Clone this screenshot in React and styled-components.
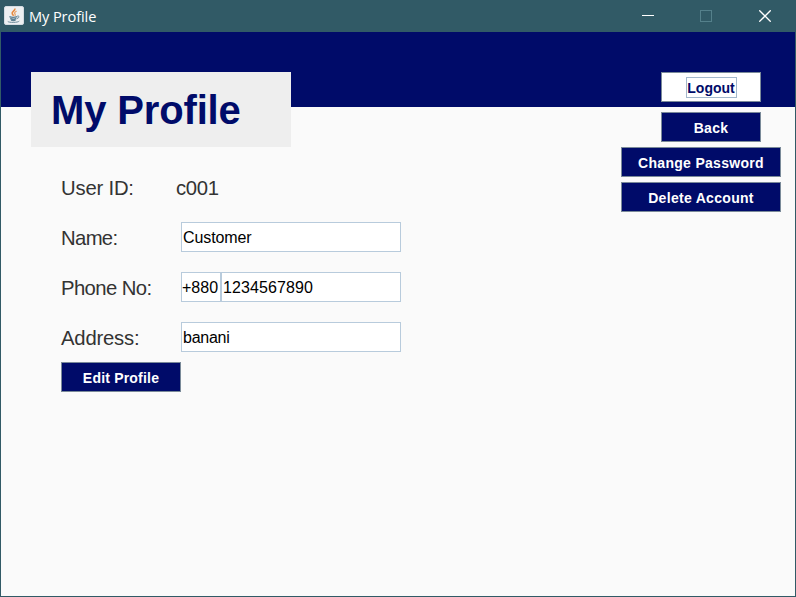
import React from "react";
import styled, { createGlobalStyle } from "styled-components";

const GlobalStyle = createGlobalStyle`
  *, *::before, *::after { box-sizing: border-box; }
  body { margin: 0; overflow: hidden; font-family: "Liberation Sans", Arial, sans-serif; }
`;

const Window = styled.div`
  display: flex;
  flex-direction: column;
  width: 796px;
  height: 597px;
  background: #fafafa;
  border: solid #315a66;
  border-width: 0 1px 1px;
`;

const TitleBar = styled.header`
  display: flex;
  align-items: center;
  flex: 0 0 32px;
  margin: 0 -1px;
  padding-left: 4px;
  background: #315a66;
  color: #fff;
`;

const WindowTitle = styled.span`
  flex: 1;
  margin-left: 5px;
  font: 14.6px/20px "Open Sans", "Noto Sans", sans-serif;
  letter-spacing: -0.1px;
`;

const WindowControls = styled.div`
  display: flex;
  width: 175px;
  margin-right: 2px;
`;

const ControlButton = styled.button`
  display: flex;
  align-items: center;
  justify-content: center;
  flex: 1;
  height: 32px;
  padding: 0;
  border: 0;
  background: none;
  color: ${(p) => (p.disabled ? "#54808b" : "#fff")};
`;

const Body = styled.main`
  display: flex;
  justify-content: space-between;
  flex: 1;
  padding: 40px 14px 0 30px;
  background: linear-gradient(#000b69 75px, #fafafa 75px);
`;

const Profile = styled.section`
  width: 370px;
`;

const Heading = styled.h1`
  width: 260px;
  height: 75px;
  margin: 0 0 25px;
  padding-left: 20px;
  background: #eee;
  color: #000b69;
  font-size: 40px;
  font-weight: bold;
  line-height: 77px;
  letter-spacing: -0.15px;
`;

const Form = styled.div`
  display: flex;
  flex-direction: column;
  gap: 20px;
  padding-left: 30px;
`;

const Row = styled.div`
  display: grid;
  grid-template-columns: ${(p) => p.$labelWidth || "120px"} 220px;
  height: 30px;
`;

const Label = styled.span`
  color: #333;
  font-size: 20.3px;
  line-height: 32px;
  letter-spacing: ${(p) => p.$tracking};
  white-space: nowrap;
`;

const Fields = styled.div`
  display: flex;
`;

const Field = styled.input`
  flex: ${(p) => (p.$width ? `0 0 ${p.$width}` : "1")};
  min-width: 0;
  height: 30px;
  padding: ${(p) => (p.$width ? "2px 0 0" : "2px 1px 0")};
  border: 1px solid #b8cbdc;
  border-radius: 0;
  outline: none;
  background: #fff;
  color: #000;
  font: 16px "Liberation Sans", Arial, sans-serif;
  letter-spacing: ${(p) => p.$tracking || "0"};
`;

const Actions = styled.nav`
  display: flex;
  flex-direction: column;
  align-items: flex-end;
  gap: 5px;
  width: 160px;
`;

const Button = styled.button`
  display: flex;
  align-items: center;
  justify-content: center;
  flex: 0 0 30px;
  width: ${(p) => p.$width};
  height: 30px;
  margin: ${(p) => p.$margin || "0"};
  padding: 2px 0 0;
  border: 1px solid #7a8a99;
  border-radius: 0;
  background: ${(p) => (p.$active ? "#fff" : "#000b69")};
  color: ${(p) => (p.$active ? "#000b69" : "#fff")};
  font: bold 14px "Liberation Sans", Arial, sans-serif;
  letter-spacing: ${(p) => p.$tracking || "0.3px"};
  white-space: nowrap;
`;

const FocusRing = styled.span`
  width: 51px;
  height: 21px;
  margin-top: -2px;
  border: 1px solid #a3b8cc;
  line-height: 21px;
`;

const JavaIcon = () => (
  <svg width="20" height="20" viewBox="0 0 20 20" fill="none">
    <rect x="0.5" y="0.5" width="19" height="18" rx="1.5" fill="#edf0f2" stroke="#d4dce2" />
    <path d="M10.8 2.5c1 2-3.5 3.2-2.6 5.1.3.8 1.1 1.3 1.2 2.2" stroke="#e58b42" strokeWidth="1.6" />
    <path d="M12.6 5.2c-2.3 1-2.4 2.1-1.5 3 .5.6.2 1.1-.4 1.6" stroke="#e8a56c" strokeWidth="1.3" />
    <path d="M5.4 10.7c2 .8 5.6.7 7.8 0M6.2 12.5c2 .7 4.6.7 6.2 0M7 14.1c1.5.5 3.3.5 4.6 0" stroke="#5d8193" strokeWidth="1.4" />
    <path d="M13.2 10.1c2.6-.7 2.2 2-.2 2.4M4 15.2c-1 1.4 9.5 1.8 11.3-.1" stroke="#6b8a9a" />
  </svg>
);

const MinimizeIcon = () => (
  <svg width="12" height="12" viewBox="0 0 12 12" shapeRendering="crispEdges">
    <path d="M0 5.5h12" stroke="currentColor" />
  </svg>
);

const MaximizeIcon = () => (
  <svg width="12" height="12" viewBox="0 0 12 12" shapeRendering="crispEdges">
    <rect x="0.5" y="0.5" width="11" height="11" fill="none" stroke="currentColor" />
  </svg>
);

const CloseIcon = () => (
  <svg width="12" height="12" viewBox="0 0 12 12">
    <path d="M.3.3l11.4 11.4M11.7.3L.3 11.7" stroke="currentColor" strokeWidth="1.3" />
  </svg>
);

export default function App() {
  return (
    <>
      <GlobalStyle />
      <Window>
        <TitleBar>
          <JavaIcon />
          <WindowTitle>My Profile</WindowTitle>
          <WindowControls>
            <ControlButton aria-label="Minimize"><MinimizeIcon /></ControlButton>
            <ControlButton aria-label="Maximize" disabled><MaximizeIcon /></ControlButton>
            <ControlButton aria-label="Close"><CloseIcon /></ControlButton>
          </WindowControls>
        </TitleBar>
        <Body>
          <Profile>
            <Heading>My Profile</Heading>
            <Form>
              <Row $labelWidth="115px">
                <Label $tracking="-0.2px">User ID:</Label>
                <Label $tracking="-0.3px">c001</Label>
              </Row>
              <Row>
                <Label $tracking="-0.65px">Name:</Label>
                <Fields><Field aria-label="Name" $tracking="-0.1px" defaultValue="Customer" /></Fields>
              </Row>
              <Row>
                <Label $tracking="-0.6px">Phone No:</Label>
                <Fields>
                  <Field aria-label="Country code" $width="40px" defaultValue="+880" />
                  <Field aria-label="Phone number" $tracking="0.1px" defaultValue="1234567890" />
                </Fields>
              </Row>
              <Row>
                <Label $tracking="-0.2px">Address:</Label>
                <Fields><Field aria-label="Address" $tracking="-0.25px" defaultValue="banani" /></Fields>
              </Row>
              <Button $width="120px" $margin="-10px 0 0" $tracking="0.2px">Edit Profile</Button>
            </Form>
          </Profile>
          <Actions>
            <Button $width="100px" $margin="0 20px 5px 0" $active $tracking="0">
              <FocusRing>Logout</FocusRing>
            </Button>
            <Button $width="100px" $margin="0 20px 0 0">Back</Button>
            <Button $width="160px">Change Password</Button>
            <Button $width="160px">Delete Account</Button>
          </Actions>
        </Body>
      </Window>
    </>
  );
}
